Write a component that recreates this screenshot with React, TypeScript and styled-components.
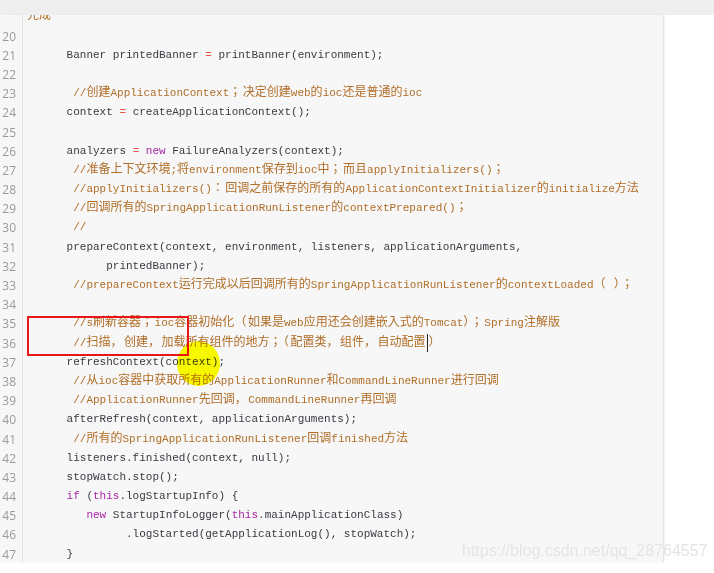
import React from 'react';
import styled, { createGlobalStyle } from 'styled-components';

const GlobalStyle = createGlobalStyle`
  html, body {
    margin: 0;
    padding: 0;
    background: #ffffff;
  }
`;

const Page = styled.div`
  position: relative;
  width: 714px;
  height: 573px;
  overflow: hidden;
  background: #ffffff;
`;

const TopBar = styled.div`
  height: 15px;
  background: #efefef;
`;

const CodePanel = styled.div`
  position: relative;
  width: 663px;
  height: 547px;
  overflow: hidden;
  background: #f7f7f7;
  border-right: 1px solid #e4e4e4;
  box-shadow: 1px 0 2px rgba(0, 0, 0, 0.05);
`;

const Lines = styled.div`
  margin-top: -7.6px;
`;

const Row = styled.div`
  display: flex;
  height: 19.2px;
  line-height: 19.2px;
`;

const Gutter = styled.div`
  flex: 0 0 auto;
  width: 16px;
  padding-right: 6px;
  border-right: 1px solid #e2e2e2;
  text-align: right;
  font-family: 'Open Sans', 'Noto Sans', sans-serif;
  font-size: 12px;
  color: #9a9a9a;
`;

const Code = styled.div`
  padding-left: 4px;
  white-space: pre;
  font-family: 'Liberation Mono', 'Noto Sans CJK JP', monospace;
  font-size: 11px;
  color: #383a42;
`;

const Tok = styled.span<{ $kind: string }>`
  color: ${(p) =>
    p.$kind === 'kw' ? '#a626a4' : p.$kind === 'op' ? '#e45649' : p.$kind === 'cm' ? '#b06e28' : 'inherit'};
`;

const Cjk = styled.span<{ $punct?: boolean }>`
  font-family: 'Noto Sans CJK JP', 'Noto Sans CJK SC', sans-serif;
  font-size: 12px;
  line-height: 1;
  letter-spacing: ${(p) => (p.$punct ? '1.5px' : '0')};
`;

const Caret = styled.span`
  display: inline-block;
  width: 0;
  height: 18px;
  margin: 0 1px;
  border-left: 1px solid #222;
  vertical-align: middle;
`;

const Highlight = styled.div`
  position: absolute;
  left: 27px;
  top: 301px;
  width: 158px;
  height: 36px;
  border: 2px solid #e8161b;
`;

const Pointer = styled.div`
  position: absolute;
  left: 177px;
  top: 326px;
  width: 43px;
  height: 45px;
  border-radius: 50%;
  background: #ffff00;
  mix-blend-mode: multiply;
`;

const Watermark = styled.div`
  position: absolute;
  left: 462px;
  top: 542px;
  font-family: 'Liberation Sans', Arial, sans-serif;
  font-size: 16px;
  color: rgba(226, 226, 226, 0.95);
  text-shadow: 0 0 1px rgba(255, 255, 255, 0.9);
`;

// first entry is the wrapped tail of line 18, so it has no number; ¦ marks the text caret
const lines: string[] = [
  '完成',
  '',
  '      Banner printedBanner = printBanner(environment);',
  '',
  '       //创建ApplicationContext；决定创建web的ioc还是普通的ioc',
  '      context = createApplicationContext();',
  '',
  '      analyzers = new FailureAnalyzers(context);',
  '       //准备上下文环境;将environment保存到ioc中；而且applyInitializers()；',
  '       //applyInitializers()：回调之前保存的所有的ApplicationContextInitializer的initialize方法',
  '       //回调所有的SpringApplicationRunListener的contextPrepared()；',
  '       //',
  '      prepareContext(context, environment, listeners, applicationArguments,',
  '            printedBanner);',
  '       //prepareContext运行完成以后回调所有的SpringApplicationRunListener的contextLoaded（ ）；',
  '',
  '       //s刷新容器；ioc容器初始化（如果是web应用还会创建嵌入式的Tomcat）；Spring注解版',
  '       //扫描，创建，加载所有组件的地方；（配置类，组件，自动配置¦）',
  '      refreshContext(context);',
  '       //从ioc容器中获取所有的ApplicationRunner和CommandLineRunner进行回调',
  '       //ApplicationRunner先回调，CommandLineRunner再回调',
  '      afterRefresh(context, applicationArguments);',
  '       //所有的SpringApplicationRunListener回调finished方法',
  '      listeners.finished(context, null);',
  '      stopWatch.stop();',
  '      if (this.logStartupInfo) {',
  '         new StartupInfoLogger(this.mainApplicationClass)',
  '               .logStarted(getApplicationLog(), stopWatch);',
  '      }',
];

const CJK = /([\u3000-\u303f\uff00-\uffef]+|[\u3400-\u9fff]+|¦)/;
const PUNCT = /^[\u3000-\u303f\uff00-\uffef]/;

// split a run of text into latin / CJK / punctuation pieces so CJK gets its own size
const withCjk = (text: string, key: string) =>
  text.split(CJK).map((part, i) => {
    if (i % 2 === 0) return part;
    if (part === '¦') return <Caret key={`${key}-${i}`} />;
    return (
      <Cjk key={`${key}-${i}`} $punct={PUNCT.test(part)}>
        {part}
      </Cjk>
    );
  });

const tokenize = (line: string, idx: number): [string, string][] => {
  if (idx === 0 || line.trim().startsWith('//')) return [['cm', line]];
  return line
    .split(/(\bnew\b|\bthis\b|\bif\b|=)/)
    .filter((s) => s.length > 0)
    .map((s) => [s === '=' ? 'op' : /^(new|this|if)$/.test(s) ? 'kw' : 'pl', s]);
};

const App: React.FC = () => {
  return (
    <Page>
      <GlobalStyle />
      <TopBar />
      <CodePanel>
        <Lines>
          {lines.map((line, i) => (
            <Row key={i}>
              <Gutter>{i === 0 ? '' : i + 19}</Gutter>
              <Code>
                {tokenize(line, i).map(([kind, text], j) => (
                  <Tok key={j} $kind={kind}>
                    {withCjk(text, `${i}-${j}`)}
                  </Tok>
                ))}
              </Code>
            </Row>
          ))}
        </Lines>
        <Highlight />
        <Pointer />
      </CodePanel>
      <Watermark>https://blog.csdn.net/qq_28764557</Watermark>
    </Page>
  );
};

export default App;
